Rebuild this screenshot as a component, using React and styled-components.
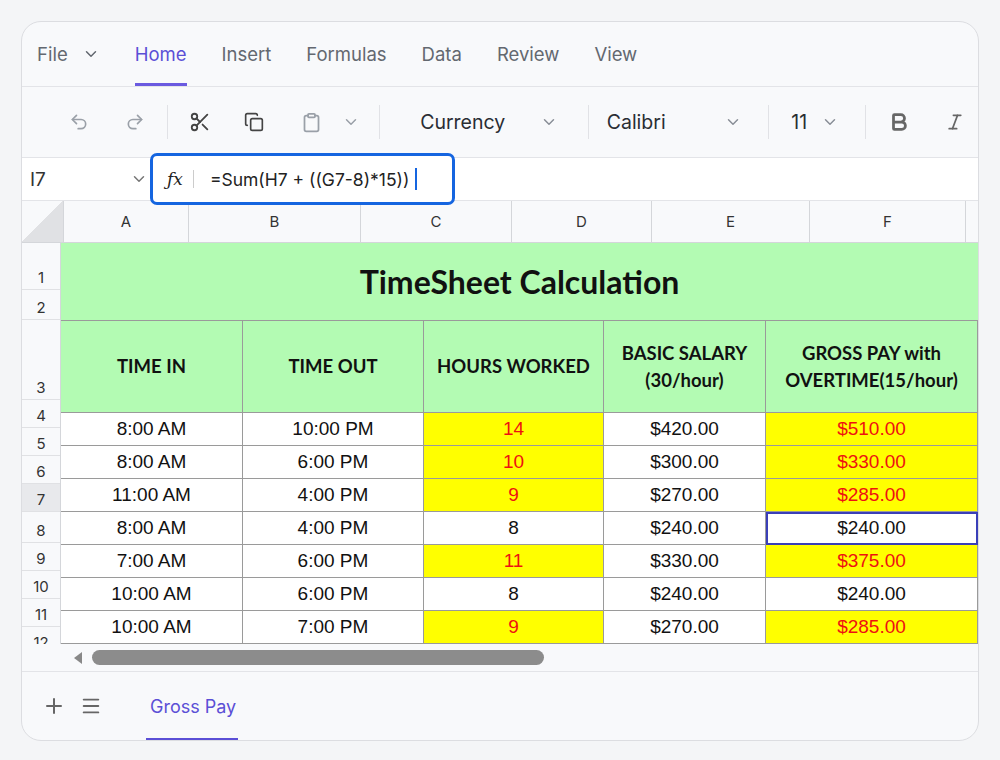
import React from 'react';
import styled, { createGlobalStyle } from 'styled-components';
import { Undo2, Redo2, Scissors, Copy, Clipboard, ChevronDown, Bold, Italic, Plus, Menu } from 'lucide-react';

const Global = createGlobalStyle`
	body { margin: 0; background: #f4f5f7; font-family: Inter, "Liberation Sans", sans-serif; }
`;

const Page = styled.div`
	width: 1000px;
	height: 760px;
	padding: 21px;
	box-sizing: border-box;
`;

const Card = styled.div`
	height: 718px;
	border: 1.5px solid #dcdde1;
	border-radius: 20px;
	background: #f8f9fb;
	overflow: hidden;
	display: flex;
	flex-direction: column;
`;

const Tabs = styled.div`
	height: 64px;
	flex-shrink: 0;
	display: flex;
	align-items: stretch;
	padding-left: 15px;
	gap: 35px;
	border-bottom: 1px solid #e3e4e8;
`;

const Tab = styled.div`
	display: flex;
	align-items: center;
	gap: 14px;
	font-size: 18.5px;
	color: ${(p) => (p.active ? '#5b4fd6' : '#636870')};
	border-bottom: 3px solid ${(p) => (p.active ? '#6a5ae0' : 'transparent')};
	padding-top: 3px;
`;

const Toolbar = styled.div`
	height: 70px;
	flex-shrink: 0;
	display: flex;
	align-items: center;
	padding-left: 28px;
	border-bottom: 1px solid #e3e4e8;
	color: #8a8f98;
`;

const Btn = styled.div`
	width: ${(p) => p.w || 58}px;
	display: flex;
	align-items: center;
	justify-content: center;
	color: ${(p) => p.color || '#9aa0a8'};
`;

const Sep = styled.div`
	width: 1px;
	height: 34px;
	background: #e1e2e6;
	margin: 0 ${(p) => p.m || 0}px;
`;

const Select = styled.div`
	width: ${(p) => p.w}px;
	box-sizing: border-box;
	display: flex;
	align-items: center;
	justify-content: space-between;
	padding: 0 ${(p) => p.pr}px 0 ${(p) => p.pl}px;
	font-size: 19.5px;
	color: #2a2d33;
	svg { color: #8a8f98; }
`;

const FormulaRow = styled.div`
	height: 42px;
	flex-shrink: 0;
	background: #fff;
	display: flex;
	align-items: center;
	border-bottom: 1px solid #e3e4e8;
`;

const NameBox = styled.div`
	width: 118px;
	padding-left: 8px;
	display: flex;
	justify-content: space-between;
	align-items: center;
	font-size: 19px;
	color: #333;
	svg { color: #777; }
`;

const FormulaBox = styled.div`
	margin-left: 2px;
	height: 52px;
	width: 305px;
	box-sizing: border-box;
	border: 3px solid #1565e0;
	border-radius: 7px;
	background: #fff;
	display: flex;
	align-items: center;
	padding-left: 14px;
	font-size: 17.5px;
	color: #222;
	z-index: 2;
	i { font-family: "DejaVu Serif", serif; font-size: 17px; margin-right: 10px; }
	b { width: 1px; height: 18px; background: #ccc; margin-right: 16px; }
	span.caret { width: 1.5px; height: 22px; background: #1565e0; margin-left: 6px; }
`;

const ColHeads = styled.div`
	height: 42px;
	flex-shrink: 0;
	display: flex;
	border-bottom: 1px solid #d4d6da;
	background: #f8f9fb;
	box-sizing: border-box;
`;

const Corner = styled.div`
	width: 41px;
	border-right: 1px solid #d4d6da;
	background: linear-gradient(135deg, transparent 50%, #e0e1e4 50%);
`;

const ColHead = styled.div`
	width: ${(p) => p.w}px;
	border-right: 1px solid #d4d6da;
	display: flex;
	align-items: center;
	justify-content: center;
	font-size: 15px;
	color: #333;
`;

const Body = styled.div`
	height: 401px;
	flex-shrink: 0;
	display: flex;
	overflow: hidden;
	background: #fff;
`;

const RowHeads = styled.div`
	width: 41px;
	background: #f8f9fb;
	border-right: 1px solid #d4d6da;
	display: flex;
	flex-direction: column;
`;

const RowHead = styled.div`
	height: ${(p) => p.h}px;
	flex-shrink: 0;
	border-bottom: 1px solid #e0e1e4;
	display: flex;
	align-items: flex-end;
	justify-content: center;
	padding-bottom: 2px;
	box-sizing: border-box;
	font-size: 15px;
	color: #333;
	background: ${(p) => (p.sel ? '#e8e9ec' : 'transparent')};
`;

const Grid = styled.div`
	display: grid;
	grid-template-columns: 182px 181px 180px 162px 212px;
	grid-auto-rows: 33px;
	grid-template-rows: 78px 92px;
	align-content: start;
	font-family: "Liberation Sans", Arial, sans-serif;
`;

const Title = styled.div`
	grid-column: 1 / -1;
	background: #b3fbb3;
	border-bottom: 1.5px solid #9a9a9a;
	display: flex;
	align-items: center;
	justify-content: center;
	font-family: Lato, "Liberation Sans", sans-serif;
	font-weight: 700;
	font-size: 32px;
	color: #111;
`;

const Head = styled.div`
	background: #b3fbb3;
	border-right: 1.5px solid #9a9a9a;
	border-bottom: 1.5px solid #9a9a9a;
	display: flex;
	align-items: center;
	justify-content: center;
	text-align: center;
	font-family: Lato, "Liberation Sans", sans-serif;
	font-weight: 700;
	font-size: 18.5px;
	line-height: 1.45;
	color: #111;
`;

const Cell = styled.div`
	background: ${(p) => (p.hi ? '#ffff00' : '#fff')};
	color: ${(p) => (p.hi ? '#ee1111' : '#111')};
	border-right: 1.5px solid #9a9a9a;
	border-bottom: 1.5px solid #9a9a9a;
	display: flex;
	align-items: center;
	justify-content: center;
	font-size: 19px;
	${(p) => p.sel && `outline: 2px solid #3a3fb8; outline-offset: -2px;`}
`;

const Scroll = styled.div`
	height: 27px;
	flex-shrink: 0;
	display: flex;
	align-items: center;
	padding-left: 52px;
	gap: 10px;
	border-bottom: 1px solid #e3e4e8;
	span { border: 6px solid transparent; border-right: 8px solid #888; border-left: 0; }
	div { width: 452px; height: 15px; border-radius: 8px; background: #8c8c8c; }
`;

const Sheets = styled.div`
	flex: 1;
	display: flex;
	align-items: stretch;
	padding-left: 20px;
	gap: 14px;
	color: #666;
`;

const SheetTab = styled.div`
	margin-left: 30px;
	display: flex;
	align-items: center;
	font-size: 18px;
	color: #5b4fd6;
	border-bottom: 2px solid #5b4fd6;
	padding: 2px 2px 0 4px;
`;

const Icon = styled.div`
	display: flex;
	align-items: center;
`;

const rows = [
	['8:00 AM', '10:00 PM', '14', '$420.00', '$510.00', true],
	['8:00 AM', '6:00 PM', '10', '$300.00', '$330.00', true],
	['11:00 AM', '4:00 PM', '9', '$270.00', '$285.00', true],
	['8:00 AM', '4:00 PM', '8', '$240.00', '$240.00', false, true],
	['7:00 AM', '6:00 PM', '11', '$330.00', '$375.00', true],
	['10:00 AM', '6:00 PM', '8', '$240.00', '$240.00', false],
	['10:00 AM', '7:00 PM', '9', '$270.00', '$285.00', true],
];

const rowHeads = [
	[1, 47], [2, 30], [3, 80], [4, 28], [5, 28], [6, 28], [7, 28, true], [8, 31], [9, 28], [10, 28], [11, 28], [12, 28],
];

export default function App() {
	return (
		<Page>
			<Global />
			<Card>
				<Tabs>
					<Tab>File <ChevronDown size={18} /></Tab>
					<Tab active>Home</Tab>
					<Tab>Insert</Tab>
					<Tab>Formulas</Tab>
					<Tab>Data</Tab>
					<Tab>Review</Tab>
					<Tab>View</Tab>
				</Tabs>
				<Toolbar>
					<Btn w={60}><Undo2 size={20} /></Btn>
					<Btn w={56}><Redo2 size={20} /></Btn>
					<Sep m={5} />
					<Btn w={56} color="#444"><Scissors size={22} /></Btn>
					<Btn w={58} color="#444"><Copy size={20} /></Btn>
					<Btn w={60}><Clipboard size={21} /></Btn>
					<Btn w={22}><ChevronDown size={18} /></Btn>
					<Sep m={18} />
					<Select w={195} pl={22} pr={30}>Currency <ChevronDown size={18} /></Select>
					<Sep />
					<Select w={185} pl={18} pr={26}>Calibri <ChevronDown size={18} /></Select>
					<Sep />
					<Select w={98} pl={22} pr={26}>11 <ChevronDown size={18} /></Select>
					<Sep />
					<Btn w={68} color="#666"><Bold size={22} strokeWidth={3} /></Btn>
					<Btn w={48} color="#666"><Italic size={20} /></Btn>
				</Toolbar>
				<FormulaRow>
					<NameBox>I7 <ChevronDown size={18} /></NameBox>
					<FormulaBox>
						<i>ƒx</i><b />=Sum(H7 + ((G7-8)*15))<span className="caret" />
					</FormulaBox>
				</FormulaRow>
				<ColHeads>
					<Corner />
					<ColHead w={124}>A</ColHead>
					<ColHead w={171}>B</ColHead>
					<ColHead w={150}>C</ColHead>
					<ColHead w={139}>D</ColHead>
					<ColHead w={157}>E</ColHead>
					<ColHead w={155}>F</ColHead>
				</ColHeads>
				<Body>
					<RowHeads>
						{rowHeads.map(([n, h, s]) => (
							<RowHead key={n} h={h} sel={s}>{n}</RowHead>
						))}
					</RowHeads>
					<Grid>
						<Title>TimeSheet Calculation</Title>
						<Head>TIME IN</Head>
						<Head>TIME OUT</Head>
						<Head>HOURS WORKED</Head>
						<Head>BASIC SALARY<br />(30/hour)</Head>
						<Head>GROSS PAY with<br />OVERTIME(15/hour)</Head>
						{rows.map((r, i) => (
							<React.Fragment key={i}>
								<Cell>{r[0]}</Cell>
								<Cell>{r[1]}</Cell>
								<Cell hi={r[5]}>{r[2]}</Cell>
								<Cell>{r[3]}</Cell>
								<Cell hi={r[5]} sel={r[6]}>{r[4]}</Cell>
							</React.Fragment>
						))}
					</Grid>
				</Body>
				<Scroll><span /><div /></Scroll>
				<Sheets>
					<Icon><Plus size={24} /></Icon>
					<Icon><Menu size={22} /></Icon>
					<SheetTab>Gross Pay</SheetTab>
				</Sheets>
			</Card>
		</Page>
	);
}
